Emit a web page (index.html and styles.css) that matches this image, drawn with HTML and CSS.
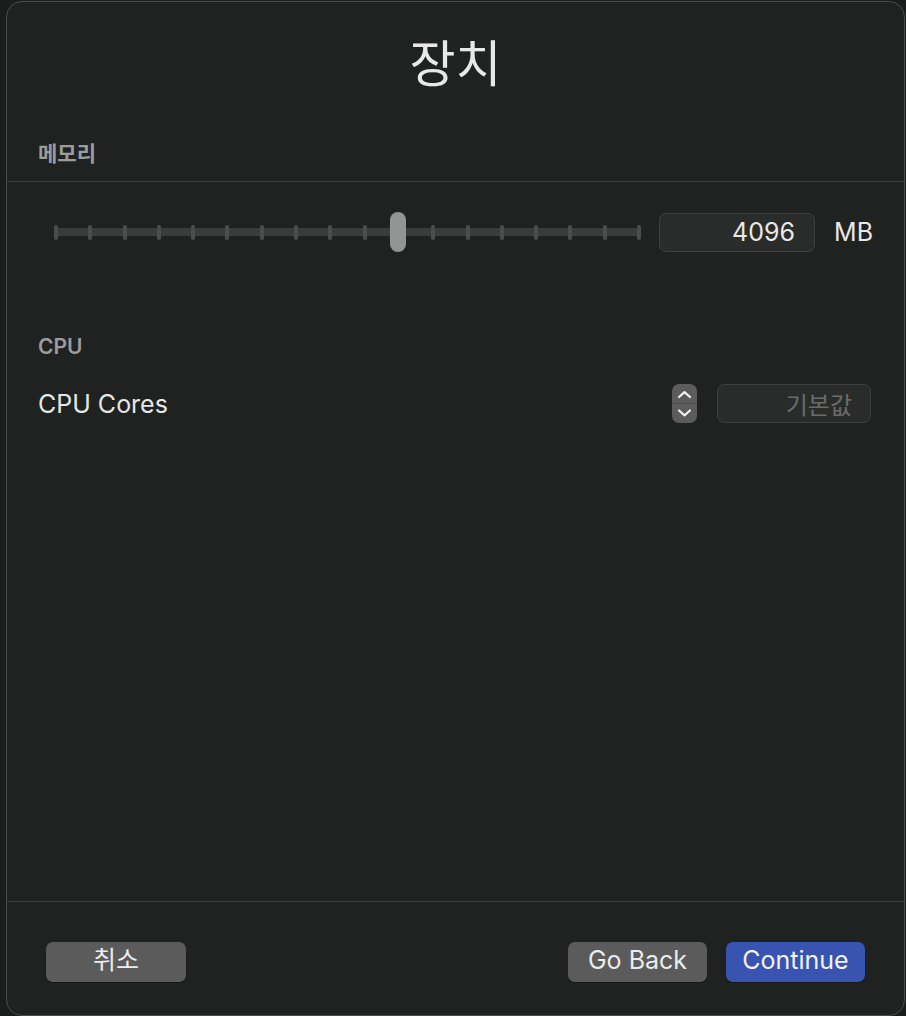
FILE: index.html
```html
<!DOCTYPE html>
<html lang="ko">
<head>
<meta charset="utf-8">
<title>장치</title>
<link rel="stylesheet" href="styles.css">
</head>
<body>
<div class="window">
  <div class="main">
    <h1 class="title">장치</h1>

    <div class="section-head">메모리</div>
    <div class="divider"></div>

    <div class="mem-row">
      <div class="slider">
        <div class="track"></div>
        <div class="ticks">
          <span></span><span></span><span></span><span></span><span></span><span></span>
          <span></span><span></span><span></span><span></span><span></span><span></span>
          <span></span><span></span><span></span><span></span><span></span><span></span>
        </div>
        <div class="thumb" style="left: 336px"></div>
      </div>
      <div class="field mem-field">4096</div>
      <div class="unit">MB</div>
    </div>

    <div class="section-head cpu-head">CPU</div>
    <div class="cpu-row">
      <div class="cpu-label">CPU Cores</div>
      <div class="stepper">
        <svg width="25" height="39" viewBox="0 0 25 39">
          <line x1="0" y1="19.5" x2="25" y2="19.5" stroke="#4b4c4b" stroke-width="1"/>
          <path d="M7 13 L12.5 8.2 L18 13" fill="none" stroke="#f2f2f2" stroke-width="2.2" stroke-linecap="round" stroke-linejoin="round"/>
          <path d="M7 26.5 L12.5 31.3 L18 26.5" fill="none" stroke="#f2f2f2" stroke-width="2.2" stroke-linecap="round" stroke-linejoin="round"/>
        </svg>
      </div>
      <div class="field cpu-field">기본값</div>
    </div>
  </div>

  <div class="footer">
    <button class="btn">취소</button>
    <div class="spacer"></div>
    <button class="btn">Go Back</button>
    <button class="btn primary">Continue</button>
  </div>
</div>
</body>
</html>
```

FILE: styles.css
```css
html, body {
  margin: 0;
  padding: 0;
  background: #1b1c1c;
}

body {
  font-family: Inter, "Noto Sans CJK KR", "Liberation Sans", sans-serif;
  color: #e6e6e6;
  width: 906px;
  height: 1016px;
  overflow: hidden;
}

.window {
  box-sizing: border-box;
  margin: 1px 1px 0 6px;
  height: 1015px;
  background: #202221;
  border: 1px solid #4a4b4b;
  border-radius: 16px;
  display: flex;
  flex-direction: column;
}

.main {
  flex: 1;
  display: flex;
  flex-direction: column;
}

.title {
  margin: 33px 0 0;
  font-family: "Noto Sans CJK KR", sans-serif;
  font-weight: 400;
  font-size: 50px;
  line-height: 50px;
  text-align: center;
  color: #e8e8e8;
}

.section-head {
  margin: 58px 0 0;
  padding: 0 31px;
  font-family: Inter, "Noto Sans CJK KR", sans-serif;
  font-weight: 600;
  font-size: 21px;
  line-height: 21px;
  color: #9b9c9c;
}

.divider {
  margin-top: 17px;
  height: 1px;
  background: #3c3e3d;
}

.mem-row {
  margin-top: 30px;
  height: 40px;
  display: flex;
  align-items: center;
  padding: 0 31px 0 47px;
}

.slider {
  position: relative;
  width: 588px;
  height: 40px;
  display: flex;
  align-items: center;
}

.track {
  position: absolute;
  left: 2px;
  right: 2px;
  top: 16px;
  height: 8px;
  background: #3a3b3b;
}

.ticks {
  position: relative;
  flex: 1;
  display: flex;
  justify-content: space-between;
}

.ticks span {
  width: 4px;
  height: 15px;
  border-radius: 2px;
  background: #4b4c4c;
}

.thumb {
  position: absolute;
  top: 0;
  width: 16px;
  height: 40px;
  border-radius: 8px;
  background: #939594;
}

.field {
  box-sizing: border-box;
  height: 39px;
  background: #2a2c2b;
  border: 1px solid #3e403f;
  border-radius: 7px;
  text-align: right;
  font-size: 25px;
  line-height: 37px;
}

.mem-field {
  margin-left: 18px;
  width: 156px;
  padding-right: 19px;
  color: #e8e8e8;
}

.unit {
  margin-left: 19px;
  font-size: 25px;
  color: #e8e8e8;
}

.cpu-head {
  margin-top: 84px;
}

.cpu-row {
  margin-top: 27px;
  display: flex;
  align-items: center;
  padding: 0 33px 0 31px;
}

.cpu-label {
  flex: 1;
  font-size: 25px;
  color: #e6e6e6;
}

.stepper {
  width: 25px;
  height: 39px;
  border-radius: 7px;
  background: #5b5c5b;
  overflow: hidden;
}

.stepper svg {
  display: block;
}

.cpu-field {
  margin-left: 20px;
  width: 154px;
  padding-right: 18px;
  font-family: "Noto Sans CJK KR", sans-serif;
  font-size: 24px;
  color: #6a6b6b;
}

.footer {
  height: 114px;
  border-top: 1px solid #3c3e3d;
  box-sizing: border-box;
  padding: 40px 39px 0;
  display: flex;
  align-items: flex-start;
  gap: 19px;
}

.spacer {
  flex: 1;
}

.btn {
  height: 40px;
  width: 139px;
  border: none;
  border-radius: 7px;
  background: #5a5b5a;
  color: #ececec;
  font-family: Inter, "Noto Sans CJK KR", sans-serif;
  font-size: 25px;
  line-height: 36px;
  padding: 0 0 4px;
  box-shadow: 0 1px 1px rgba(0,0,0,0.3);
}

.btn:first-child {
  width: 140px;
}

.btn.primary {
  background: #3953b0;
  color: #f2f2f2;
}
```
